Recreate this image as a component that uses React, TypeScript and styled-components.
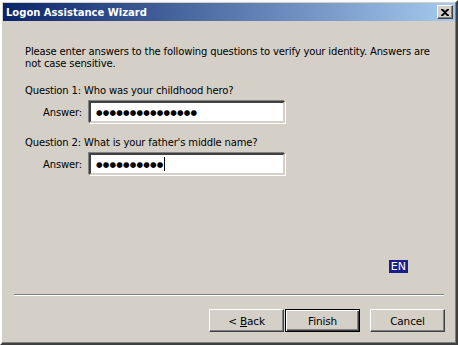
import React from "react";
import styled, { createGlobalStyle } from "styled-components";

const Global = createGlobalStyle`
  html, body { margin: 0; padding: 0; background: #d4d0c8; }
  body { width: 458px; height: 345px; overflow: hidden; font-family: Tahoma, "DejaVu Sans", sans-serif; }
`;

const Window = styled.div`
  box-sizing: border-box;
  width: 458px;
  height: 345px;
  background: #d4d0c8;
  border-style: solid;
  border-width: 2px;
  border-color: #ffffff #404040 #404040 #ffffff;
  box-shadow: inset -1px -1px 0 #808080, inset 1px 1px 0 #d4d0c8;
  padding: 1px;
  display: flex;
  flex-direction: column;
  font-size: 10px;
  letter-spacing: -0.15px;
  color: #000;
`;

const TitleBar = styled.div`
  height: 18px;
  display: flex;
  align-items: center;
  justify-content: space-between;
  padding: 0 2px 0 3px;
  background: linear-gradient(to right, #0a246a, #a6caf0);
`;

const TitleText = styled.span`
  color: #fff;
  font-weight: bold;
  font-size: 10px;
  letter-spacing: 0;
`;

const CloseBtn = styled.div`
  box-sizing: border-box;
  width: 16px;
  height: 14px;
  background: #d4d0c8;
  border-style: solid;
  border-width: 1px;
  border-color: #ffffff #404040 #404040 #ffffff;
  box-shadow: inset -1px -1px 0 #808080;
  display: flex;
  align-items: center;
  justify-content: center;
`;

const Body = styled.div`
  flex: 1;
  display: flex;
  flex-direction: column;
  padding: 25px 0 0 22px;
`;

const Intro = styled.p`
  margin: 0;
  width: 408px;
  line-height: 12px;
`;

const Question = styled.div<{ $first?: boolean }>`
  margin-top: ${(p) => (p.$first ? "14px" : "13px")};
  line-height: 13px;
`;

const AnswerRow = styled.div`
  display: flex;
  align-items: center;
  margin-top: 4px;
`;

const Label = styled.span`
  width: 57px;
  text-align: right;
  margin-right: 8px;
`;

const Field = styled.div`
  box-sizing: border-box;
  width: 196px;
  height: 22px;
  margin-left: -1px;
  background: #fff;
  border-style: solid;
  border-width: 2px;
  border-color: #404040 #d4d0c8 #d4d0c8 #404040;
  box-shadow: -1px -1px 0 #808080, 1px 1px 0 #fff;
  display: flex;
  align-items: center;
  padding-left: 5px;
  font-size: 7.5px;
  letter-spacing: 0.2px;
`;

const Caret = styled.span`
  display: inline-block;
  width: 1px;
  height: 14px;
  background: #000;
  margin-left: 1px;
`;

const Spacer = styled.div`
  flex: 1;
`;

const LangRow = styled.div`
  display: flex;
  justify-content: flex-end;
  padding-right: 47px;
`;

const Lang = styled.span`
  background: #1c1c8c;
  color: #fff;
  font-size: 11px;
  letter-spacing: 0;
  padding: 0 2px;
  line-height: 13px;
`;

const Separator = styled.div`
  margin: 21px 11px 0 11px;
  border-top: 1px solid #808080;
  border-bottom: 1px solid #fff;
`;

const Buttons = styled.div`
  display: flex;
  justify-content: flex-end;
  padding: 13px 10px 10px 0;
  gap: 1px;
`;

const Button = styled.div<{ $default?: boolean; $gap?: boolean }>`
  box-sizing: border-box;
  width: 75px;
  height: 23px;
  display: flex;
  align-items: center;
  justify-content: center;
  font-size: 10.5px;
  border-style: solid;
  border-width: 1px;
  border-color: ${(p) => (p.$default ? "#000" : "#fff #404040 #404040 #fff")};
  box-shadow: ${(p) =>
    p.$default
      ? "inset 1px 1px 0 #fff, inset -1px -1px 0 #404040, inset -2px -2px 0 #808080"
      : "inset -1px -1px 0 #808080"};
  margin-left: ${(p) => (p.$gap ? "9px" : "0")};
`;

export default function App() {
  return (
    <>
      <Global />
      <Window>
        <TitleBar>
          <TitleText>Logon Assistance Wizard</TitleText>
          <CloseBtn>
            <svg width="8" height="7" viewBox="0 0 8 7">
              <path d="M0 0h2l2 2 2-2h2v1L5 3.5 8 6v1H6L4 5 2 7H0V6l3-2.5L0 1z" fill="#000" />
            </svg>
          </CloseBtn>
        </TitleBar>
        <Body>
          <Intro>
            Please enter answers to the following questions to verify your identity. Answers are not case sensitive.
          </Intro>
          <Question $first>Question 1: Who was your childhood hero?</Question>
          <AnswerRow>
            <Label>Answer:</Label>
            <Field>●●●●●●●●●●●●●●●</Field>
          </AnswerRow>
          <Question>Question 2: What is your father's middle name?</Question>
          <AnswerRow>
            <Label>Answer:</Label>
            <Field>
              ●●●●●●●●●●<Caret />
            </Field>
          </AnswerRow>
          <Spacer />
          <LangRow>
            <Lang>EN</Lang>
          </LangRow>
        </Body>
        <Separator />
        <Buttons>
          <Button>
            &lt;&nbsp;<u>B</u>ack
          </Button>
          <Button $default>Finish</Button>
          <Button $gap>Cancel</Button>
        </Buttons>
      </Window>
    </>
  );
}
